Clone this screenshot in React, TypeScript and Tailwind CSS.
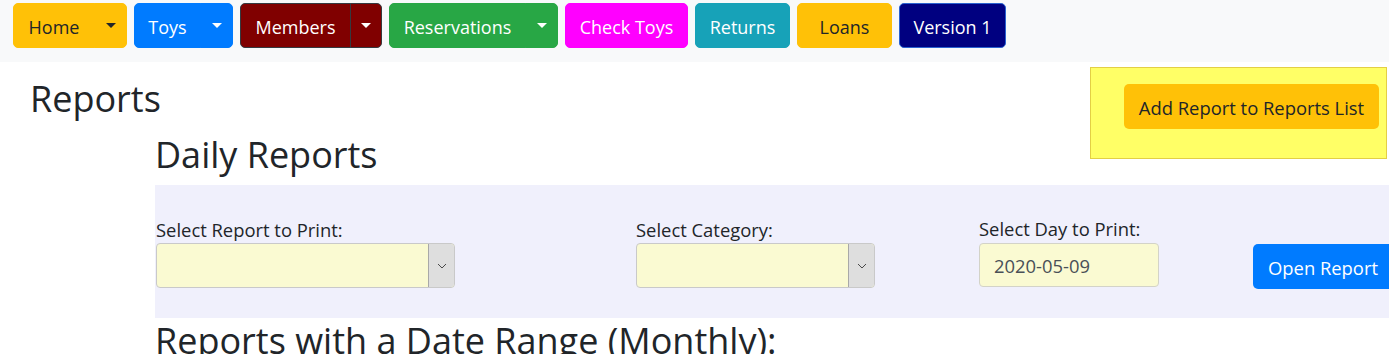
import React from "react";

const Caret = ({ color }: { color: string }) => (
  <svg width="10" height="5" viewBox="0 0 10 5" aria-hidden="true">
    <path d="M0 0h10L5 5z" fill={color} />
  </svg>
);

const Chevron = () => (
  <svg width="10" height="6" viewBox="0 0 10 6" aria-hidden="true">
    <path d="M1 1l4 4 4-4" fill="none" stroke="#4a4a4a" strokeWidth="1" />
  </svg>
);

function Split({
  label,
  main,
  toggle,
  caret,
}: {
  label: string;
  main: string;
  toggle: string;
  caret: string;
}) {
  return (
    <div className="flex h-[45px] shrink-0">
      <button className={main}>
        <span className="pt-[3px]">{label}</span>
      </button>
      <button className={toggle}>
        <Caret color={caret} />
      </button>
    </div>
  );
}

function FakeSelect({ w }: { w: string }) {
  return (
    <div className={`${w} h-[45px] flex bg-[#fafad2] border border-[#c9c9c9] rounded-[4px] overflow-hidden`}>
      <div className="flex-1" />
      <div className="w-[26px] h-full bg-[#dedede] border-l border-[#a8a8a8] rounded-r-[3px] flex items-center justify-center">
        <Chevron />
      </div>
    </div>
  );
}

export default function App() {
  return (
    <div className="min-h-screen w-full overflow-hidden bg-white text-[#212529] font-['Open_Sans',sans-serif]">
      {/* Nav bar */}
      <div className="h-[62px] bg-[#f8f9fa] pt-[3px] pl-[13px] flex items-start gap-[7px] text-[18px]">
        <Split
          label="Home"
          main="w-[82px] h-full flex items-center justify-center bg-[#ffc107] border border-[#ffc107] rounded-l-[5px] text-[#212529]"
          toggle="w-[33px] -ml-px h-full flex items-center justify-center bg-[#ffc107] border border-[#ffc107] rounded-r-[5px]"
          caret="#212529"
        />
        <Split
          label="Toys"
          main="w-[67px] h-full flex items-center justify-center bg-[#007bff] border border-[#007bff] rounded-l-[5px] text-white"
          toggle="w-[33px] -ml-px h-full flex items-center justify-center bg-[#007bff] border border-[#007bff] rounded-r-[5px]"
          caret="#ffffff"
        />
        <Split
          label="Members"
          main="w-[111px] h-full flex items-center justify-center bg-[#800000] border border-[#343a40] rounded-l-[5px] text-white"
          toggle="w-[32px] -ml-px h-full flex items-center justify-center bg-[#800000] border border-[#343a40] rounded-r-[5px]"
          caret="#ffffff"
        />
        <Split
          label="Reservations"
          main="w-[137px] h-full flex items-center justify-center bg-[#28a745] border border-[#28a745] rounded-l-[5px] text-white"
          toggle="w-[33px] -ml-px h-full flex items-center justify-center bg-[#28a745] border border-[#28a745] rounded-r-[5px]"
          caret="#ffffff"
        />
        <button className="w-[123px] h-[45px] shrink-0 flex items-center justify-center bg-[#ff00ff] border border-[#ff00ff] rounded-[5px] text-white">
          <span className="pt-[3px]">Check Toys</span>
        </button>
        <button className="w-[95px] h-[45px] shrink-0 flex items-center justify-center bg-[#17a2b8] border border-[#17a2b8] rounded-[5px] text-white">
          <span className="pt-[3px]">Returns</span>
        </button>
        <button className="w-[95px] h-[45px] shrink-0 flex items-center justify-center bg-[#ffc107] border border-[#ffc107] rounded-[5px] text-[#212529]">
          <span className="pt-[3px]">Loans</span>
        </button>
        <button className="w-[107px] h-[45px] shrink-0 flex items-center justify-center bg-[#000080] border border-[#2a62d0] rounded-[5px] text-white">
          <span className="pt-[3px]">Version 1</span>
        </button>
      </div>

      {/* Content */}
      <div className="pt-[5px] flow-root">
        <div className="float-right w-[297px] h-[92px] mr-[2px] bg-[#ffff66] border border-[#e3cf45] pt-[16px] pl-[33px]">
          <button className="w-[255px] h-[45px] flex items-center justify-center bg-[#ffc107] rounded-[5px] text-[18.4px] text-[#212529]">
            <span className="pt-[3px]">Add Report to Reports List</span>
          </button>
        </div>

        <h1 className="ml-[30px] mt-[9.5px] text-[36px] leading-[43px] font-normal">Reports</h1>

        <div className="ml-[155px]">
          <h2 className="mt-[13px] text-[36px] leading-[43px] font-normal">Daily Reports</h2>

          <div className="mt-[9.5px] h-[133px] bg-[#f0f0fc] pt-[31px] pl-[1px] flex items-start text-[18.4px]">
            <div className="w-[299px] shrink-0">
              <div className="leading-[27px] text-[#212529]">Select Report to Print:</div>
              <FakeSelect w="w-[299px]" />
            </div>
            <div className="ml-[181px] w-[239px] shrink-0">
              <div className="leading-[27px] text-[#212529]">Select Category:</div>
              <FakeSelect w="w-[239px]" />
            </div>
            <div className="ml-[104px] w-[180px] shrink-0">
              <div className="leading-[26px] text-[#212529]">Select Day to Print:</div>
              <div className="mt-[1px] h-[44px] w-[180px] bg-[#fafad2] border border-[#d3d3c8] rounded-[4px] flex items-center pl-[14px] text-[#495057]">
                <span className="pt-[2px]">2020-05-09</span>
              </div>
            </div>
            <button className="ml-[94px] mt-[28px] h-[45px] px-[15px] shrink-0 flex items-center bg-[#007bff] rounded-[5px] text-white whitespace-nowrap">
              <span className="pt-[2px]">Open Report</span>
            </button>
          </div>

          <h2 className="mt-[1px] text-[36px] leading-[43px] font-normal whitespace-nowrap">
            Reports with a Date Range (Monthly):
          </h2>
        </div>
      </div>
    </div>
  );
}
